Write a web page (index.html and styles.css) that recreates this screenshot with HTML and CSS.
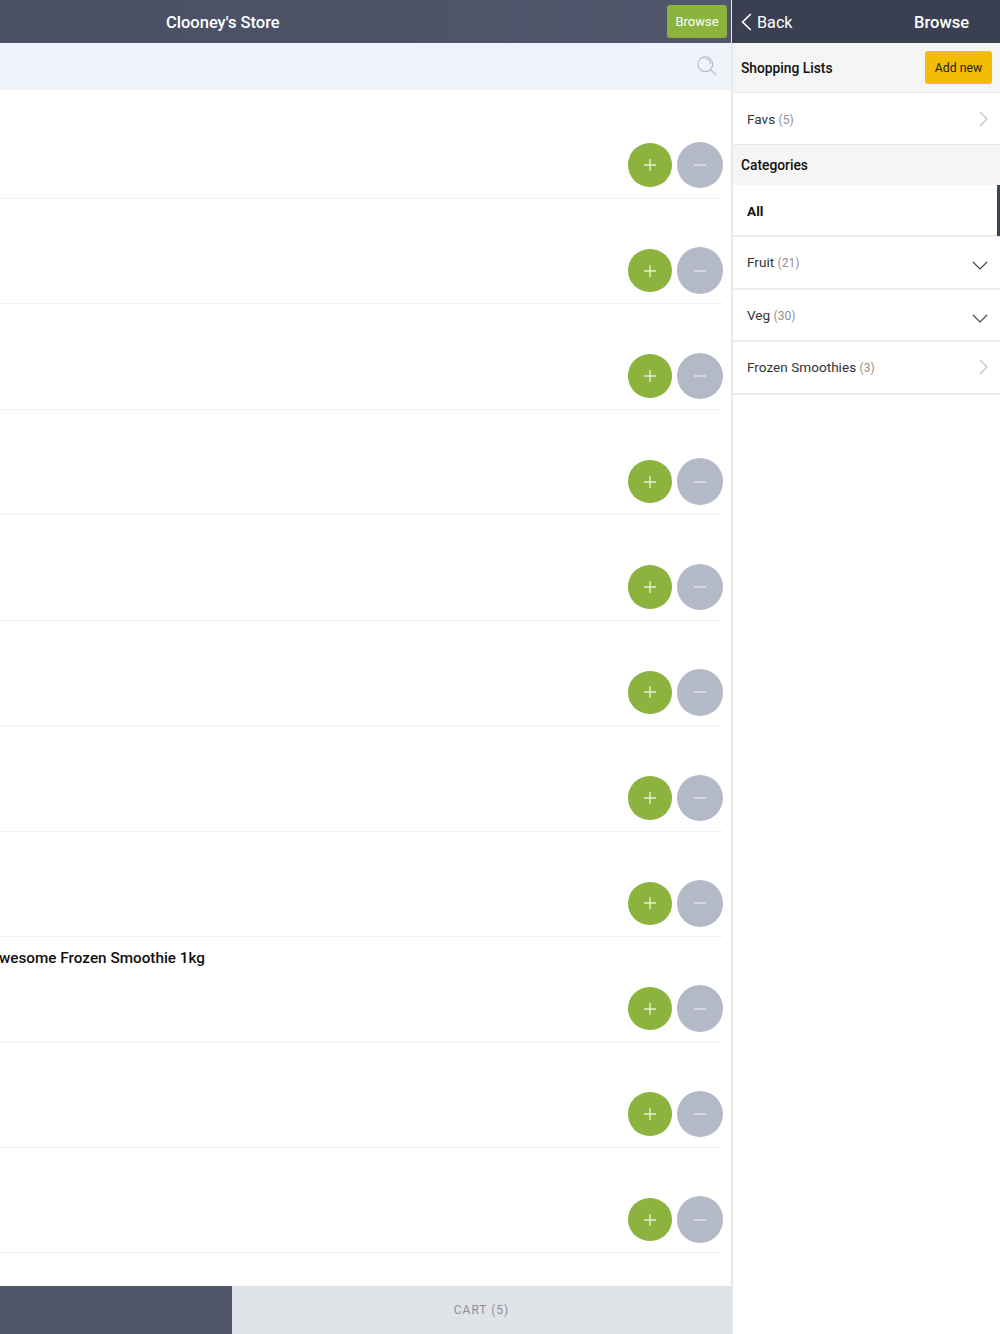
FILE: index.html
```html
<!DOCTYPE html>
<html lang="en">
<head>
<meta charset="utf-8">
<title>Clooney's Store</title>
<link rel="stylesheet" href="styles.css">
</head>
<body>
<div class="app">
  <main class="store">
    <header class="store-head">
      <h1 class="store-title">Clooney's Store</h1>
      <button class="browse-btn">Browse</button>
    </header>
    <div class="search-bar">
      <svg class="search-icon" viewBox="0 0 20 20" width="20" height="20" fill="none" stroke="#b4bbcd" stroke-width="1.2"><circle cx="8.3" cy="8.3" r="7.4"/><path d="M8.6 3a5.3 5.3 0 0 1 5 5"/><path d="M13.6 13.6 19.4 19.4"/></svg>
    </div>
    <div class="products">
      <div class="product"><div class="qty"><span class="plus"><svg viewBox="0 0 14 14" width="14" height="14"><path d="M7 1v12M1 7h12"/></svg></span><span class="minus"><svg viewBox="0 0 14 14" width="14" height="14"><path d="M1 7h12"/></svg></span></div></div>
      <div class="product"><div class="qty"><span class="plus"><svg viewBox="0 0 14 14" width="14" height="14"><path d="M7 1v12M1 7h12"/></svg></span><span class="minus"><svg viewBox="0 0 14 14" width="14" height="14"><path d="M1 7h12"/></svg></span></div></div>
      <div class="product"><div class="qty"><span class="plus"><svg viewBox="0 0 14 14" width="14" height="14"><path d="M7 1v12M1 7h12"/></svg></span><span class="minus"><svg viewBox="0 0 14 14" width="14" height="14"><path d="M1 7h12"/></svg></span></div></div>
      <div class="product"><div class="qty"><span class="plus"><svg viewBox="0 0 14 14" width="14" height="14"><path d="M7 1v12M1 7h12"/></svg></span><span class="minus"><svg viewBox="0 0 14 14" width="14" height="14"><path d="M1 7h12"/></svg></span></div></div>
      <div class="product"><div class="qty"><span class="plus"><svg viewBox="0 0 14 14" width="14" height="14"><path d="M7 1v12M1 7h12"/></svg></span><span class="minus"><svg viewBox="0 0 14 14" width="14" height="14"><path d="M1 7h12"/></svg></span></div></div>
      <div class="product"><div class="qty"><span class="plus"><svg viewBox="0 0 14 14" width="14" height="14"><path d="M7 1v12M1 7h12"/></svg></span><span class="minus"><svg viewBox="0 0 14 14" width="14" height="14"><path d="M1 7h12"/></svg></span></div></div>
      <div class="product"><div class="qty"><span class="plus"><svg viewBox="0 0 14 14" width="14" height="14"><path d="M7 1v12M1 7h12"/></svg></span><span class="minus"><svg viewBox="0 0 14 14" width="14" height="14"><path d="M1 7h12"/></svg></span></div></div>
      <div class="product"><div class="qty"><span class="plus"><svg viewBox="0 0 14 14" width="14" height="14"><path d="M7 1v12M1 7h12"/></svg></span><span class="minus"><svg viewBox="0 0 14 14" width="14" height="14"><path d="M1 7h12"/></svg></span></div></div>
      <div class="product"><div class="product-name">Awesome Frozen Smoothie 1kg</div><div class="qty"><span class="plus"><svg viewBox="0 0 14 14" width="14" height="14"><path d="M7 1v12M1 7h12"/></svg></span><span class="minus"><svg viewBox="0 0 14 14" width="14" height="14"><path d="M1 7h12"/></svg></span></div></div>
      <div class="product"><div class="qty"><span class="plus"><svg viewBox="0 0 14 14" width="14" height="14"><path d="M7 1v12M1 7h12"/></svg></span><span class="minus"><svg viewBox="0 0 14 14" width="14" height="14"><path d="M1 7h12"/></svg></span></div></div>
      <div class="product"><div class="qty"><span class="plus"><svg viewBox="0 0 14 14" width="14" height="14"><path d="M7 1v12M1 7h12"/></svg></span><span class="minus"><svg viewBox="0 0 14 14" width="14" height="14"><path d="M1 7h12"/></svg></span></div></div>
    </div>
    <footer class="tabs">
      <div class="tab-dark"></div>
      <div class="tab-cart">CART (5)</div>
    </footer>
  </main>
  <aside class="panel">
    <header class="panel-head">
      <div class="back">
        <svg viewBox="0 0 11 18" width="11" height="18" fill="none" stroke="#fff" stroke-width="1.7"><path d="M9.8 1 1.6 9l8.2 8"/></svg>
        <span>Back</span>
      </div>
      <div class="panel-title">Browse</div>
    </header>
    <div class="section lists-section">
      <span class="section-title">Shopping Lists</span>
      <button class="add-btn">Add new</button>
    </div>
    <div class="item favs">
      <span class="item-label">Favs <small>(5)</small></span>
      <svg class="chev-right" viewBox="0 0 9 16" width="9" height="16" fill="none" stroke="#c4c4c4" stroke-width="1.3"><path d="M1 1l7 7-7 7"/></svg>
    </div>
    <div class="section cats-section"><span class="section-title">Categories</span></div>
    <div class="item active"><span class="item-label">All</span></div>
    <div class="item">
      <span class="item-label">Fruit <small>(21)</small></span>
      <svg class="chev-down" viewBox="0 0 16 9" width="16" height="9" fill="none" stroke="#444" stroke-width="1.2"><path d="M1 1l7 7 7-7"/></svg>
    </div>
    <div class="item">
      <span class="item-label">Veg <small>(30)</small></span>
      <svg class="chev-down" viewBox="0 0 16 9" width="16" height="9" fill="none" stroke="#444" stroke-width="1.2"><path d="M1 1l7 7 7-7"/></svg>
    </div>
    <div class="item last">
      <span class="item-label">Frozen Smoothies <small>(3)</small></span>
      <svg class="chev-right" viewBox="0 0 9 16" width="9" height="16" fill="none" stroke="#c4c4c4" stroke-width="1.3"><path d="M1 1l7 7-7 7"/></svg>
    </div>
  </aside>
</div>
</body>
</html>
```
FILE: styles.css
```css
* { box-sizing: border-box; }
html, body { margin: 0; height: 100%; }
body { font-family: Roboto, "Liberation Sans", sans-serif; background: #fff; color: #111; overflow: hidden; }
.app { display: flex; width: 1000px; height: 1334px; }

.store { width: 731px; flex: none; display: flex; flex-direction: column; overflow: hidden; }
.store-head { height: 43px; flex: none; display: flex; align-items: center; justify-content: space-between; padding: 0 4px 0 166px; background: linear-gradient(90deg, #4a5064, #50566b); }
.store-title { margin: 1px 0 0; font-size: 16.5px; font-weight: 500; color: #fff; }
.browse-btn { width: 60px; height: 33px; padding: 0; border: 0; border-radius: 3px; background: #8bb33e; color: #fff; font: 400 13px Roboto, sans-serif; }
.search-bar { height: 47px; flex: none; display: flex; align-items: center; justify-content: flex-end; padding: 0 14px 0 0; background: #f0f3f9; border-bottom: 1px solid #eceef2; }
.search-icon { display: block; }

.products { flex: 1; padding-top: 3.6px; }
.product { height: 105.45px; position: relative; margin-right: 8px; border-bottom: 1px solid #f0f1f3; display: flex; flex-direction: column; justify-content: flex-end; padding-bottom: 9.6px; }
.product-name { position: absolute; left: -11px; top: 9px; font-size: 15.3px; font-weight: 500; line-height: 24px; white-space: nowrap; color: #111; }
.qty { display: flex; justify-content: flex-end; align-items: center; gap: 5px; }
.plus, .minus { display: flex; align-items: center; justify-content: center; border-radius: 50%; }
.plus { width: 43.5px; height: 43.5px; background: #8bb33e; }
.minus { width: 46.5px; height: 46.5px; background: #b4b9c7; }
.plus svg, .minus svg { fill: none; stroke: #e6f0d2; stroke-width: 1.4; }
.minus svg { stroke: #e2e4ea; }

.tabs { height: 48px; flex: none; display: flex; }
.tab-dark { width: 231.5px; background: #4f5669; }
.tab-cart { flex: 1; margin-left: .5px; background: #dfe2e7; color: #8c9096; font-size: 12px; letter-spacing: 1px; display: flex; align-items: center; justify-content: center; }

.panel { flex: 1; border-left: 2px solid #e8e8e8; background: #fff; }
.panel-head { height: 43px; margin-left: -1px; display: flex; align-items: center; background: #3a3f51; color: #fff; padding-left: 9px; }
.back { display: flex; align-items: center; gap: 5px; font-size: 16.2px; width: 173px; }
.back span { margin-top: 1px; }
.back svg { display: block; }
.panel-title { font-size: 16.5px; font-weight: 500; margin-top: 1px; }
.section { display: flex; align-items: center; justify-content: space-between; background: #f5f5f5; padding: 0 8px; border-bottom: 1px solid #e8e8e8; }
.lists-section { height: 50px; }
.cats-section { height: 40px; border-bottom: 0; }
.section-title { font-size: 13.8px; font-weight: 500; color: #111; }
.add-btn { width: 67px; height: 33px; padding: 0; border: 0; border-radius: 3px; background: #f3bd07; color: #222; font: 400 12.3px Roboto, sans-serif; }
.item { height: 52.3px; display: flex; align-items: center; justify-content: space-between; padding: 0 12px 0 14px; border-bottom: 2px solid #ececec; position: relative; }
.favs { height: 52px; border-bottom: 1px solid #e8e8e8; }
.last { height: 53px; }
.item-label { font-size: 13.6px; color: #333; }
.item-label small { font-size: 12px; color: #8f8f8f; }
.active .item-label { font-weight: 700; color: #111; padding-top: 1px; }
.active::after { content: ""; position: absolute; right: 0; top: 0; bottom: -1px; width: 3px; background: #3f4456; }
.chev-right { display: block; }
.chev-down { display: block; margin-top: 7px; }
```
